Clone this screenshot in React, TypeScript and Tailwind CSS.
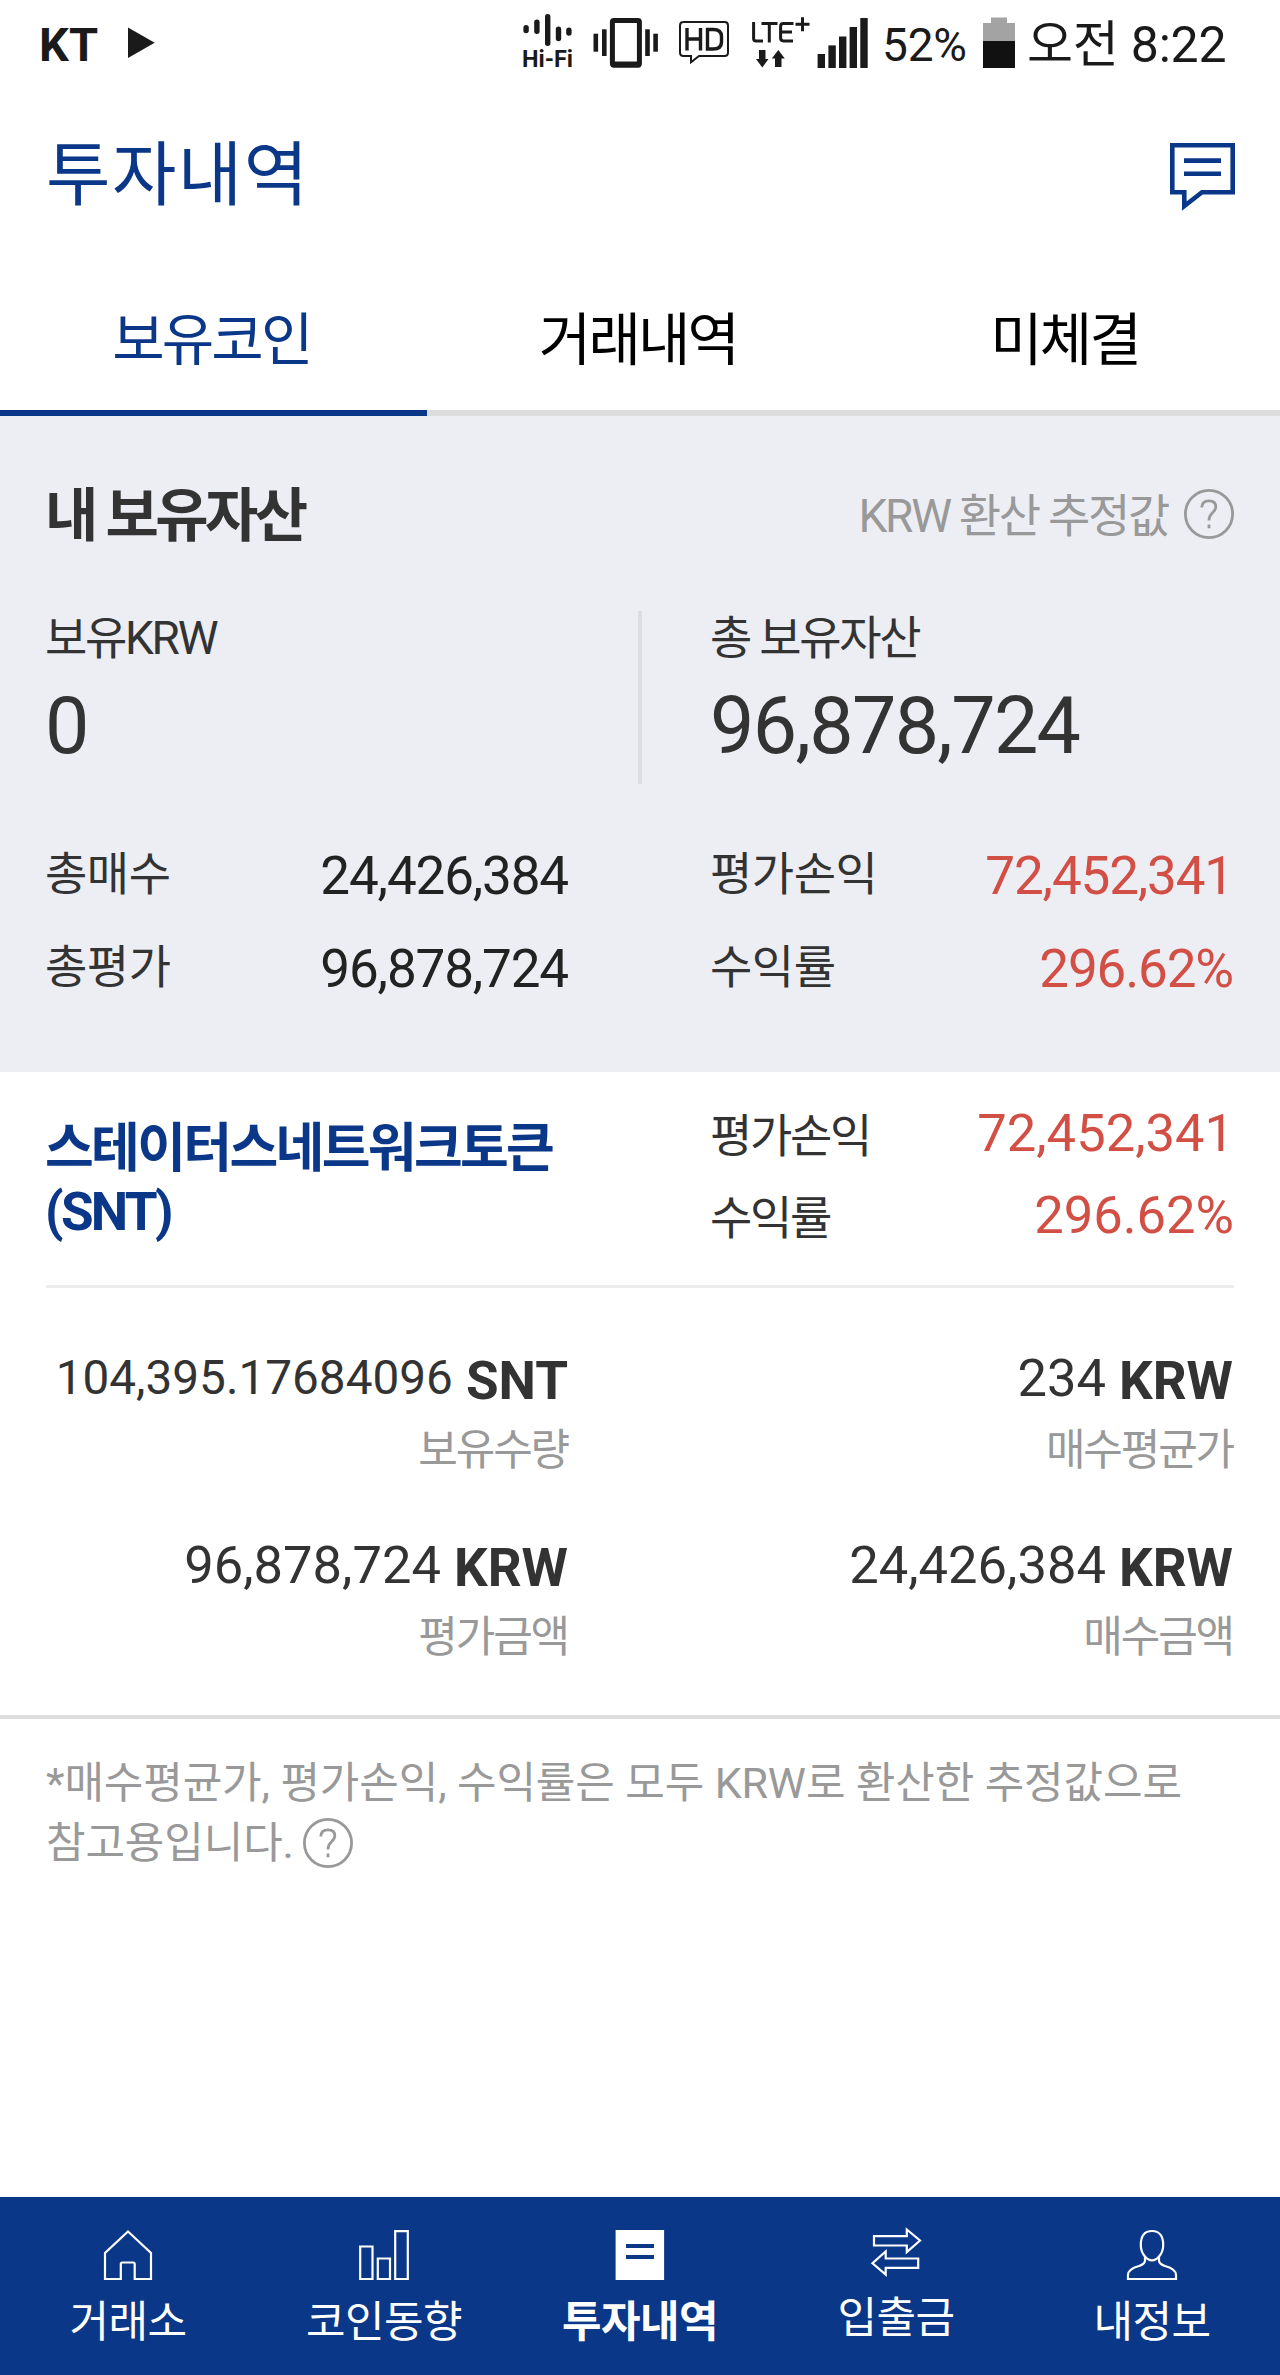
import type { ReactNode } from "react";

const FONT = "font-[Roboto,'Noto_Sans_CJK_KR',sans-serif]";

function HiFiIcon() {
  return (
    <svg className="ml-[361px] h-[90px] w-[60px] shrink-0 overflow-visible" viewBox="517 0 60 90" fill="#1a1a1a">
      <rect x="523.4" y="25" width="5.4" height="8.2" rx="2.7" />
      <rect x="534.2" y="19.5" width="5.4" height="14.5" rx="2.7" />
      <rect x="545" y="14" width="5.4" height="32" rx="2.7" />
      <rect x="555.8" y="26.5" width="5.4" height="14.7" rx="2.7" />
      <rect x="566.2" y="27.5" width="5.4" height="8.2" rx="2.7" />
      <text x="522" y="66.7" fontFamily="Roboto" fontWeight="700" fontSize="24.5" textLength="51" lengthAdjust="spacingAndGlyphs">Hi-Fi</text>
    </svg>
  );
}

function VibrateIcon() {
  return (
    <svg className="ml-[16px] h-[90px] w-[66px] shrink-0" viewBox="593 0 66 90" fill="#1a1a1a">
      <rect x="593.5" y="33.7" width="4.6" height="18" />
      <rect x="602" y="29.3" width="4.6" height="26.7" />
      <rect x="612.4" y="20.4" width="27" height="44.6" rx="1.5" fill="none" stroke="#1a1a1a" strokeWidth="5" />
      <rect x="611" y="61.6" width="30" height="6" rx="2" />
      <rect x="645.2" y="29.3" width="4.6" height="26.7" />
      <rect x="653.3" y="33.7" width="4.6" height="18" />
    </svg>
  );
}

function HdIcon() {
  return (
    <svg className="ml-[19px] h-[90px] w-[54px] shrink-0" viewBox="678 0 54 90">
      <path d="M683 22.1H724.500Q728 22.100 728 25.500V52.500Q728 56 724.500 56H699L691 62.200V56H683.500Q680 56 680 52.500V25.500Q680 22.100 683.500 22.100Z" fill="none" stroke="#1a1a1a" strokeWidth="2" />
      <path d="M687 28V50.500M700.500 28V50.500M687 39H700.500M707.500 29.500V49H713Q721.500 49 721.500 42V36.500Q721.500 29.500 713 29.500Z" fill="none" stroke="#1a1a1a" strokeWidth="3.4" />
    </svg>
  );
}

function LteIcon() {
  return (
    <svg className="ml-[18px] h-[90px] w-[62px] shrink-0" viewBox="750 0 62 90" fill="#1a1a1a">
      <path d="M753.600 22V38.500Q753.600 40.900 756 40.900H763M761.500 23.600H777.500M769.300 23.600V42.500M793.500 23.600H783.500Q780.600 23.600 780.600 26.500V38Q780.600 40.900 783.500 40.900H793M780.600 32H792" fill="none" stroke="#1a1a1a" strokeWidth="3" />
      <path d="M802.500 17.200V31.200M795.500 24.200H809.500" stroke="#1a1a1a" strokeWidth="3" />
      <path d="M759 50H765.500V59H768.500L762.300 67.500L756 59H759ZM775 67H781.500V58.500H784.800L778.300 50L771.800 58.500H775Z" />
    </svg>
  );
}

function SignalIcon() {
  return (
    <svg className="ml-[4px] h-[90px] w-[54px] shrink-0" viewBox="816 0 54 90" fill="#1a1a1a">
      <rect x="817.6" y="54" width="7.4" height="14" />
      <rect x="828.4" y="45.400" width="7.400" height="22.600" />
      <rect x="839" y="36.500" width="7.400" height="31.500" />
      <rect x="849.600" y="27" width="7.400" height="41" />
      <rect x="860.300" y="18" width="7.400" height="50" />
    </svg>
  );
}

function BatteryIcon() {
  return (
    <svg className="h-[90px] w-[34px] shrink-0" viewBox="982 0 34 90">
      <path d="M983 41V23H991V17.500H1007V23H1015V41Z" fill="#a3a3a3" />
      <rect x="983" y="41" width="32" height="27" fill="#111" />
    </svg>
  );
}

function StatusBar() {
  return (
    <div className="flex h-[90px] items-center whitespace-nowrap leading-[90px] text-[#1a1a1a]">
      <span className="ml-[39px] w-[89px] text-[47px] font-bold">KT</span>
      <svg className="h-[90px] w-[28px] shrink-0" viewBox="128 0 28 90">
        <path d="M128 27.500L154.700 42.700L128 58Z" fill="#1a1a1a" />
      </svg>
      <HiFiIcon />
      <VibrateIcon />
      <HdIcon />
      <LteIcon />
      <SignalIcon />
      <span className="ml-[12px] w-[100px] text-[46px] tracking-[-0.2px]">52%</span>
      <BatteryIcon />
      <span className="ml-[11px] text-[50px] tracking-[-0.2px]">오전 8:22</span>
    </div>
  );
}

function Header() {
  return (
    <header className="flex h-[172px] items-center justify-between pr-[44px] pl-[46px] text-[#0a3787]">
      <h1 className="text-[70px] leading-[100px] tracking-[1.5px]">투자내역</h1>
      <svg className="h-[70px] w-[67px]" viewBox="1169 141 67 70" fill="none" stroke="#0a3787" strokeWidth="4.600">
        <path d="M1172.300 145.300H1232.700V192.300H1202L1184.300 206V192.300H1172.300Z" />
        <path d="M1184 160.600H1221M1184 173.700H1221" />
      </svg>
    </header>
  );
}

function Tabs() {
  const tabs = ["보유코인", "거래내역", "미체결"];
  return (
    <nav className="grid h-[154px] grid-cols-3 text-center text-[57px] leading-[80px] tracking-[-0.05em]">
      {tabs.map((t, i) => (
        <div
          key={t}
          className={
            i === 0
              ? "border-b-[6px] border-[#0a3787] pt-[39px] pr-[4px] text-[#0a3787]"
              : "border-b-[6px] border-[#ddd] pt-[39px] pr-[4px] text-black"
          }
        >
          {t}
        </div>
      ))}
    </nav>
  );
}

function HelpIcon() {
  return (
    <svg className="h-[52px] w-[52px] shrink-0" viewBox="0 0 52 52" fill="none" stroke="#999" strokeWidth="2.800">
      <circle cx="26" cy="26" r="23.600" />
      <path d="M18.800 19.500Q19 12.800 26 12.800Q32.800 12.800 32.800 18.800Q32.800 21.800 29.500 24.800Q26 28 26 32.500" />
      <path d="M26 36.500V40.300" />
    </svg>
  );
}

function SummaryRow({ label, value, red }: { label: string; value: string; red?: boolean }) {
  return (
    <div className="flex h-[60px] justify-between">
      <span className="text-[46px] leading-[57px] tracking-[-0.5px] text-[#333]">{label}</span>
      <span
        className={
          red
            ? "text-[53px] leading-[60px] tracking-[-1.15px] text-[#d24f45]"
            : "text-[53px] leading-[60px] tracking-[-1.15px] text-[#222]"
        }
      >
        {value}
      </span>
    </div>
  );
}

function AssetSummary() {
  return (
    <section className="h-[656px] bg-[#edeef4] pt-[60px] text-[#333]">
      <div className="flex h-[80px] items-center justify-between pr-[45px] pl-[45px]">
        <h2 className="text-[58px] leading-[80px] font-bold tracking-[-3.600px]">내 보유자산</h2>
        <div className="flex items-center gap-[15px] text-[46px] leading-[80px] tracking-[-0.05em] text-[#999]">
          KRW 환산 추정값
          <div className="pb-[4px]">
            <HelpIcon />
          </div>
        </div>
      </div>

      <div className="mt-[52px] flex h-[176px] pl-[45px]">
        <div className="w-[593px]">
          <p className="text-[46px] leading-[60px] tracking-[-0.05em]">보유KRW</p>
          <p className="mt-[8px] text-[79px] leading-[100px] tracking-[-1.700px]">0</p>
        </div>
        <div className="mt-[3px] w-[4px] bg-[#dddee1]" />
        <div className="pl-[68px]">
          <p className="text-[46px] leading-[60px] tracking-[-0.05em]">총 보유자산</p>
          <p className="mt-[8px] text-[79px] leading-[100px] tracking-[-1.700px]">96,878,724</p>
        </div>
      </div>

      <div className="mt-[62px] flex justify-between pr-[47px] pl-[45px]">
        <div className="flex w-[523px] flex-col gap-[33px]">
          <SummaryRow label="총매수" value="24,426,384" />
          <SummaryRow label="총평가" value="96,878,724" />
        </div>
        <div className="flex w-[523px] flex-col gap-[33px]">
          <SummaryRow label="평가손익" value="72,452,341" red />
          <SummaryRow label="수익률" value="296.62%" red />
        </div>
      </div>
    </section>
  );
}

function ProfitRow({ label, value }: { label: string; value: string }) {
  return (
    <div className="flex h-[60px] justify-between">
      <span className="text-[46px] leading-[67px] tracking-[-0.05em]">{label}</span>
      <span className="text-[52.500px] leading-[61px] text-[#d24f45]">{value}</span>
    </div>
  );
}

function Holding({ value, unit, label, small }: { value: string; unit: string; label: string; small?: boolean }) {
  return (
    <div className="text-right">
      <div className="flex h-[60px] justify-end gap-[13px] leading-[60px] whitespace-nowrap">
        <span className={small ? "text-[47.700px]" : "text-[52.500px]"}>{value}</span>
        <span className="text-[53px] leading-[66px] font-bold">{unit}</span>
      </div>
      <p className="mt-[17px] text-[43px] leading-[50px] tracking-[-0.05em] text-[#999]">{label}</p>
    </div>
  );
}

function CoinCard() {
  return (
    <section className="h-[647px] border-b-[4px] border-[#ddd] text-[#333]">
      <div className="mx-[46px] flex h-[216px] justify-between border-b-[3px] border-[#ececec]">
        <h3 className="-ml-px pt-[46px] text-[53px] leading-[63px] font-bold tracking-[-0.05em] text-[#0a3787]">
          스테이터스네트워크토큰
          <br />
          (SNT)
        </h3>
        <div className="flex w-[524px] flex-col gap-[22px] pt-[31px]">
          <ProfitRow label="평가손익" value="72,452,341" />
          <ProfitRow label="수익률" value="296.62%" />
        </div>
      </div>
      <div className="flex justify-between pt-[60px] pr-[47px] pl-[45px]">
        <div className="flex w-[523px] flex-col gap-[60px]">
          <Holding value="104,395.17684096" unit="SNT" label="보유수량" small />
          <Holding value="96,878,724" unit="KRW" label="평가금액" />
        </div>
        <div className="flex w-[523px] flex-col gap-[60px]">
          <Holding value="234" unit="KRW" label="매수평균가" />
          <Holding value="24,426,384" unit="KRW" label="매수금액" />
        </div>
      </div>
    </section>
  );
}

function Footnote() {
  return (
    <div className="mt-[34px] pl-[46px] text-[43px] leading-[60px] tracking-[-0.130px] text-[#999]">
      <p className="whitespace-nowrap">*매수평균가, 평가손익, 수익률은 모두 KRW로 환산한 추정값으로</p>
      <div className="flex h-[60px] items-center gap-[8px]">
        <span>참고용입니다.</span>
        <HelpIcon />
      </div>
    </div>
  );
}

function NavItem({ label, active, raised, children }: { label: string; active?: boolean; raised?: boolean; children: ReactNode }) {
  return (
    <div className="flex flex-col items-center pt-[28px]">
      <svg className="h-[60px] w-[60px]" viewBox="0 0 60 60" fill="none" stroke="#fff" strokeWidth="2.200">
        {children}
      </svg>
      <span
        className={
          (raised ? "mt-[8px] " : "mt-[12px] ") +
          (active
            ? "text-[43px] leading-[50px] font-bold tracking-[-0.500px]"
            : "text-[43px] leading-[50px] tracking-[-0.500px]")
        }
      >
        {label}
      </span>
    </div>
  );
}

function BottomNav() {
  return (
    <nav className="mt-auto grid h-[178px] grid-cols-5 bg-[#0a3787] text-white">
      <NavItem label="거래소">
        <path d="M30 6.500L53 28V54H36.700V39Q36.700 37.500 35.200 37.500H24.300Q22.800 37.500 22.800 39V54H7V28Z" />
      </NavItem>
      <NavItem label="코인동향">
        <path d="M6.200 21.500H18.500V54H6.200ZM23.800 33.500H36V54H23.800ZM41.200 6.200H53.800V54H41.200Z" />
      </NavItem>
      <NavItem label="투자내역" active>
        <rect x="5.600" y="5" width="48.500" height="50" fill="#fff" stroke="none" />
        <path d="M16 21H44M16 32H44" stroke="#0a3787" strokeWidth="4" />
      </NavItem>
      <NavItem label="입출금" raised>
        <path d="M8 11.200H40.800V4.500L54 15.500L40.800 27V20.500H8ZM52.200 33.500H19.700V26.500L6.500 38.300L19.700 49.500V42.800H52.200Z" />
      </NavItem>
      <NavItem label="내정보">
        <path d="M30 6C22 6 18.800 12 18.800 20C18.800 29 25 35.300 30 35.300C35 35.300 41.200 29 41.200 20C41.200 12 38 6 30 6Z" />
        <path d="M23 32V36Q22.500 39 17 41Q6 44 6 50V54H54V50Q54 44 43 41Q37.500 39 37 36V32" />
      </NavItem>
    </nav>
  );
}

export default function App() {
  return (
    <div className={`flex h-[2375px] w-[1280px] flex-col overflow-hidden bg-white ${FONT}`}>
      <StatusBar />
      <Header />
      <Tabs />
      <AssetSummary />
      <CoinCard />
      <Footnote />
      <BottomNav />
    </div>
  );
}
